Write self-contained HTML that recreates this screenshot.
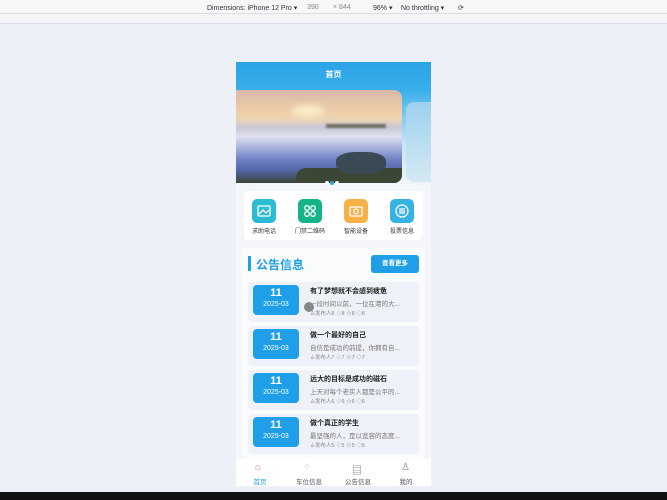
<!DOCTYPE html><html><head><meta charset="utf-8"><style>
*{margin:0;padding:0;box-sizing:border-box}
body{width:667px;height:500px;overflow:hidden;background:#edf1f7;font-family:"Liberation Sans","Noto Sans CJK SC",sans-serif;position:relative}
.top{position:absolute;left:0;top:0;width:667px;height:14px;background:#f6f7f9;font-size:7px;color:#333;border-bottom:1px solid #ddd}
.top span{position:absolute;top:4px}
.rul{position:absolute;left:0;top:14px;width:667px;height:10px;background:#f3f5f8;border-bottom:1px solid #dde}
.phone{position:absolute;left:236px;top:62px;width:195px;height:424px;background:#f4f6fa;overflow:hidden}
.hdr{position:absolute;left:0;top:0;width:195px;height:130px;background:linear-gradient(#2aa3e8 0,#3aaeea 28px,#bfe3f7 80px,#f4f6fa 125px)}
.hdr b{position:absolute;top:7px;width:100%;text-align:center;color:#fff;font-size:8px}
.ban{position:absolute;left:0;top:28px;width:166px;height:93px;border-radius:0 8px 8px 0;overflow:hidden;background:linear-gradient(#d9b8a8 0,#efcfa8 25%,#e9d4b6 32%,#c9c7d6 40%,#dfe0ee 50%,#a7b1dd 62%,#6f80c4 75%,#5367a8 86%,#3b4538 100%)}
.peek{position:absolute;left:170px;top:40px;width:25px;height:80px;border-radius:8px 0 0 8px;background:linear-gradient(#9dd1ef,#d5e9f3)}
.dots{position:absolute}
.dots i{display:inline-block;width:4px;height:4px;border-radius:50%;background:#fff;margin-right:1px}
.card{position:absolute;background:#fff;border-radius:5px}
.ic{position:absolute;top:8px;width:24px;height:24px;border-radius:5px}
.ic svg{position:absolute;left:4px;top:4px}
.il{position:absolute;top:35px;font-size:6px;color:#333;width:40px;text-align:center}
.item{position:absolute;left:12px;width:171px;height:40px;background:#eef1f7;border-radius:4px}
.dt{position:absolute;left:5px;top:3px;width:46px;height:30px;background:#1e9fe8;border-radius:4px;color:#fff;text-align:center}
.dt b{display:block;font-size:11px;margin-top:2px}
.dt s{display:block;text-decoration:none;font-size:7px;margin-top:2px}
.t1{position:absolute;left:62px;top:4px;font-size:7px;color:#222;font-weight:bold}
.t2{position:absolute;left:62px;top:16px;font-size:6.5px;color:#777}
.t3{position:absolute;left:62px;top:27px;font-size:5.5px;color:#888}
.tab{position:absolute;left:0;top:397px;width:195px;height:27px;background:#fff}
.tab div{position:absolute;top:17px;font-size:6.5px;color:#555;width:48px;text-align:center}
</style></head><body>
<div class="top"><span style="left:207px">Dimensions: iPhone 12 Pro ▾</span><span style="left:307px;color:#888">390</span><span style="left:333px;color:#888">×  844</span><span style="left:373px">96% ▾</span><span style="left:401px">No throttling ▾</span><span style="left:458px">⟳</span></div>
<div class="rul"></div>
<div class="phone">
<div class="hdr"><b>首页</b></div>
<div class="ban"><div style="position:absolute;left:55px;top:16px;width:34px;height:10px;border-radius:50%;background:#fff3d0;filter:blur(4px)"></div><div style="position:absolute;left:90px;top:34px;width:60px;height:4px;background:#6c6a60;filter:blur(1px)"></div><div style="position:absolute;left:60px;top:78px;width:106px;height:15px;background:#3c4634;border-radius:10px 0 0 0"></div><div style="position:absolute;left:100px;top:62px;width:50px;height:22px;border-radius:40%;background:#3a4a55"></div></div>
<div class="peek"></div>
<div class="dots" style="left:89px;top:110px"><i></i><i style="background:#2aa3e8"></i><i></i></div>
<div class="card" style="left:8px;top:129px;width:179px;height:49px">
<div class="ic" style="left:8px;background:#2bbcd1"><svg width="16" height="16" fill="none" stroke="#fff" stroke-width="1.3"><rect x="2" y="3" width="12" height="10" rx="1"/><path d="M3 11l4-4 3 3 3-3"/></svg></div><div class="il" style="left:0">求助电话</div>
<div class="ic" style="left:54px;background:#14b38a"><svg width="16" height="16" fill="none" stroke="#fff" stroke-width="1.3"><circle cx="5" cy="5" r="2.3"/><circle cx="11" cy="5" r="2.3"/><circle cx="5" cy="11" r="2.3"/><circle cx="11" cy="11" r="2.3"/></svg></div><div class="il" style="left:46px">门禁二维码</div>
<div class="ic" style="left:100px;background:#f6b046"><svg width="16" height="16" fill="none" stroke="#fff" stroke-width="1.3"><rect x="2" y="4" width="12" height="9" rx="1"/><circle cx="8" cy="8.5" r="2.3"/></svg></div><div class="il" style="left:92px">智能设备</div>
<div class="ic" style="left:146px;background:#36b3e3"><svg width="16" height="16" fill="none" stroke="#fff" stroke-width="1.3"><circle cx="8" cy="8" r="6"/><path d="M5 6h6M5 8h6M5 10h6"/></svg></div><div class="il" style="left:138px">投票信息</div>
</div>
<div class="card" style="left:6px;top:186px;width:183px;height:211px;background:#fafbfd">
<div style="position:absolute;left:6px;top:8px;width:3px;height:15px;background:#1e9fe8"></div>
<div style="position:absolute;left:14px;top:8px;font-size:12px;color:#1e9fe8;font-weight:bold">公告信息</div>
<div style="position:absolute;left:129px;top:7px;width:48px;height:18px;background:#1e9fe8;border-radius:3px;color:#fff;font-size:6.5px;text-align:center;line-height:18px;font-weight:bold">查看更多</div>
<div class="item" style="left:6px;top:34px"><div class="dt"><b>11</b><s>2025-03</s></div><div class="t1">有了梦想就不会感到疲惫</div><div class="t2">一段时间以前，一位在港的大...</div><div class="t3">♙发布人8 ♢8 ☆8 ◇8</div><div style="position:absolute;left:56px;top:20px;width:10px;height:10px;border-radius:50%;background:#888"></div></div>
<div class="item" style="left:6px;top:78px"><div class="dt"><b>11</b><s>2025-03</s></div><div class="t1">做一个最好的自己</div><div class="t2">自信是成功的前提，你拥有自...</div><div class="t3">♙发布人7 ♢7 ☆7 ◇7</div></div>
<div class="item" style="left:6px;top:122px"><div class="dt"><b>11</b><s>2025-03</s></div><div class="t1">远大的目标是成功的磁石</div><div class="t2">上天对每个老实人都是公平的...</div><div class="t3">♙发布人6 ♢6 ☆6 ◇6</div></div>
<div class="item" style="left:6px;top:166px"><div class="dt"><b>11</b><s>2025-03</s></div><div class="t1">做个真正的学生</div><div class="t2">最坚强的人，是以宽容的态度...</div><div class="t3">♙发布人5 ♢5 ☆5 ◇5</div></div>
</div>
<div class="tab">
<span style="position:absolute;left:19px;top:3px;font-size:10px;color:#e07a7a">⌂</span><span style="position:absolute;left:67px;top:3px;font-size:10px;color:#bbb">⁘</span><span style="position:absolute;left:116px;top:3px;font-size:10px;color:#777">▤</span><span style="position:absolute;left:165px;top:3px;font-size:10px;color:#888">♙</span>
<div style="left:0;color:#1e9fe8">首页</div><div style="left:49px">车位信息</div><div style="left:98px">公告信息</div><div style="left:146px">我的</div>
</div>
</div>
<div style="position:absolute;left:0;top:492px;width:667px;height:8px;background:#111"></div>
</body></html>
